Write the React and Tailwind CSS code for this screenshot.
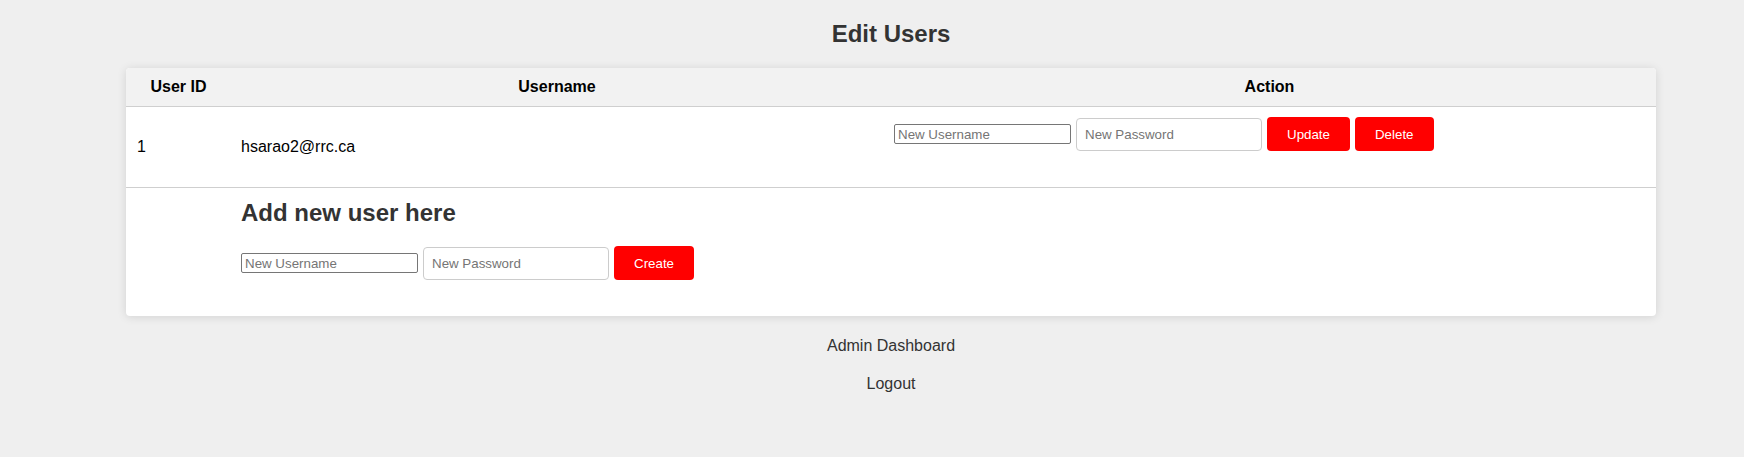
import React, { useState } from 'react';

const users = [{ id: 1, username: 'hsarao2@rrc.ca' }];

const UserRowForm = ({ buttons }) => {
  const [username, setUsername] = useState('');
  const [password, setPassword] = useState('');

  return (
    <div className="flex items-center gap-[5px] h-[34px]">
      <input
        type="text"
        value={username}
        onChange={(e) => setUsername(e.target.value)}
        placeholder="New Username"
        className="w-[177px] h-[20px] px-[3px] border border-[#767676] rounded-[2px] bg-white text-[13.33px] text-black placeholder:text-[#757575] outline-none"
      />
      <input
        type="password"
        value={password}
        onChange={(e) => setPassword(e.target.value)}
        placeholder="New Password"
        className="w-[186px] h-[33px] px-[8px] border border-[#ccc] rounded-[4px] bg-white text-[13.33px] text-black placeholder:text-[#757575] outline-none"
      />
      {buttons.map((label) => (
        <button
          key={label}
          className="h-[34px] px-[20px] bg-[#ff0000] text-white text-[13.33px] leading-[15px] rounded-[4px] cursor-pointer"
        >
          {label}
        </button>
      ))}
    </div>
  );
};

const App = () => {
  return (
    <div className="min-h-screen bg-[#efefef] font-['Liberation_Sans',Arial,sans-serif] text-black">
      <div className="ml-[41px] w-[1700px] pt-[20px] flex flex-col items-center">
        <h1 className="text-[24px] leading-[28px] font-bold text-[#333]">Edit Users</h1>

        {/* Users table */}
        <div className="mt-[20px] w-[1530px] bg-white rounded-[4px] overflow-hidden shadow-[0_1px_10px_rgba(0,0,0,0.12)]">
          <div className="grid grid-cols-[105px_652px_773px] h-[39px] bg-[#f2f2f2] border-b border-[#cfcfcf] text-[16px] font-bold">
            <div className="flex items-center justify-center">User ID</div>
            <div className="flex items-center justify-center">Username</div>
            <div className="flex items-center justify-center">Action</div>
          </div>

          {users.map((user) => (
            <div
              key={user.id}
              className="grid grid-cols-[105px_652px_773px] h-[81px] border-b border-[#cfcfcf] text-[16px]"
            >
              <div className="flex items-center pl-[11px]">{user.id}</div>
              <div className="flex items-center pl-[10px]">{user.username}</div>
              <div className="pl-[11px] pt-[10px]">
                <UserRowForm buttons={['Update', 'Delete']} />
              </div>
            </div>
          ))}

          <div className="grid grid-cols-[105px_1425px] h-[128px]">
            <div />
            <div className="pl-[10px] pt-[11px]">
              <h2 className="text-[24px] leading-[28px] font-bold text-[#333]">Add new user here</h2>
              <div className="mt-[19px]">
                <UserRowForm buttons={['Create']} />
              </div>
            </div>
          </div>
        </div>

        <a href="#" className="mt-[21px] text-[16px] leading-[18px] text-[#333] no-underline">
          Admin Dashboard
        </a>
        <a href="#" className="mt-[20px] text-[16px] leading-[18px] text-[#333] no-underline">
          Logout
        </a>
      </div>
    </div>
  );
};

export default App;
